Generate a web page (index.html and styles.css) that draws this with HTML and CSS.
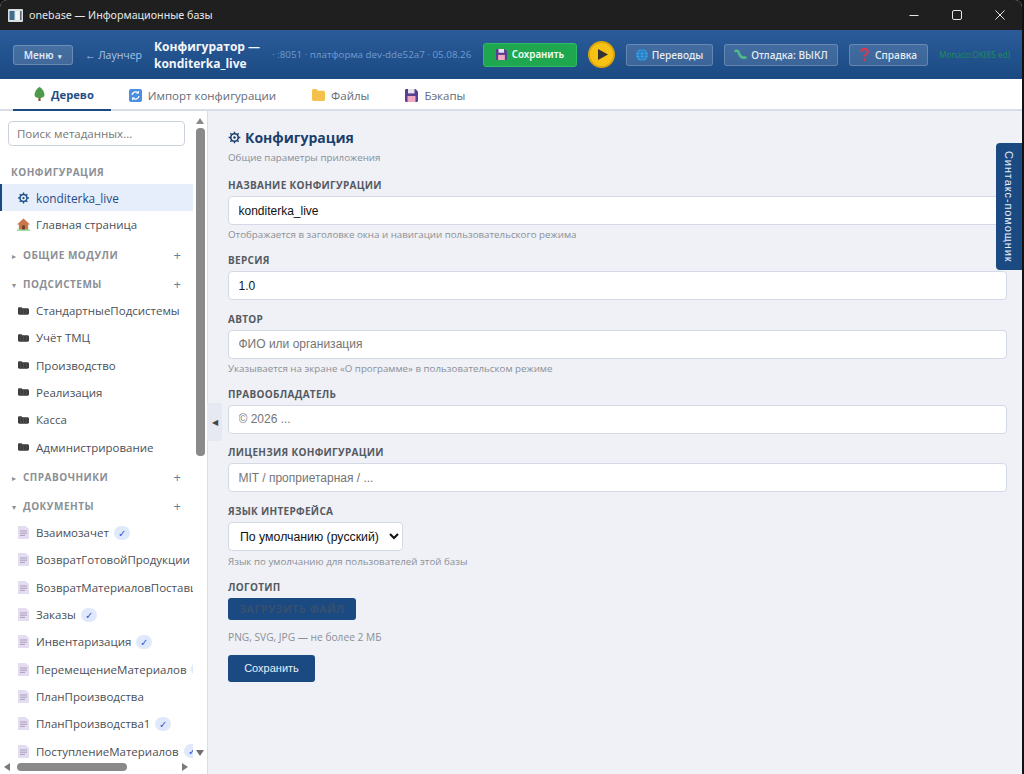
FILE: index.html
```html
<!DOCTYPE html>
<html lang="ru">
<head>
  <meta charset="UTF-8">
  <title>onebase — Информационные базы</title>
  <link rel="stylesheet" href="styles.css">
</head>
<body>
  <!-- Icon set -->
  <svg class="icon-defs" width="0" height="0">
    <symbol id="i-gear" viewBox="0 0 16 16">
      <circle cx="8" cy="8" r="4.6" fill="none" stroke="currentColor" stroke-width="2"/>
      <circle cx="8" cy="8" r="1.5" fill="currentColor"/>
      <path d="M8 .8v2.4M8 12.8v2.4M.8 8h2.4M12.8 8h2.4M2.9 2.9l1.7 1.7M11.4 11.4l1.7 1.7M2.9 13.1l1.7-1.7M11.4 4.6l1.700-1.700" stroke="currentColor" stroke-width="1.8"/>
    </symbol>
    <symbol id="i-folder" viewBox="0 0 12 10">
      <path d="M0 2.500C0 1.500.6 1 1.400 1h2.400l1 1h5.600c.9 0 1.600.7 1.600 1.600v4.200c0 .9-.7 1.200-1.600 1.200H1.400C.6 9 0 8.600 0 7.800z" fill="#3d3d3d"/>
      <path d="M3 1.500v7M6 2v7M9 2v7" stroke="#5a5a5a" stroke-width=".7"/>
    </symbol>
    <symbol id="i-doc" viewBox="0 0 11 13">
      <path d="M0 0h7.500L11 3v10H0z" fill="#e4dcf0"/>
      <path d="M2 5h7M2 7.200h7M2 9.400h5" stroke="#a99dbb" stroke-width="1"/>
    </symbol>
    <symbol id="i-floppy" viewBox="0 0 13 13">
      <path d="M0 1.200C0 .5.500 0 1.200 0h9.300L13 2.500v9.300c0 .7-.5 1.200-1.200 1.200H1.200C.5 13 0 12.500 0 11.800z" fill="#5b3f8f"/>
      <rect x="3" y="0" width="6.500" height="4.400" fill="#e8e4ef"/>
      <rect x="2.500" y="7" width="8" height="6" fill="#f2a7c3"/>
    </symbol>
  </svg>

  <div class="window">
    <!-- Title bar -->
    <div class="titlebar">
      <svg class="app-icon" width="15" height="13" viewBox="0 0 15 13">
        <rect width="15" height="13" rx="1" fill="#d9dee2"/>
        <rect x="1.500" y="2" width="5" height="9" fill="#3f6f8c"/>
        <rect x="7.500" y="2" width="4" height="9" fill="#f2f4f5"/>
        <rect x="12" y="2" width="1.600" height="9" fill="#5c6b75"/>
      </svg>
      <span class="app-title">onebase — Информационные базы</span>
      <div class="win-controls">
        <svg width="12" height="12" viewBox="0 0 12 12"><path d="M1.500 6.500h9" stroke="#e8e8e8"/></svg>
        <svg width="12" height="12" viewBox="0 0 12 12"><rect x="1.500" y="1.500" width="9" height="9" rx="1.500" fill="none" stroke="#e8e8e8"/></svg>
        <svg width="12" height="12" viewBox="0 0 12 12"><path d="M1.500 1.500l9 9M10.500 1.500l-9 9" stroke="#e8e8e8"/></svg>
      </div>
    </div>

    <!-- Header -->
    <header class="topbar">
      <button class="menu-btn">Меню <span class="caret">▾</span></button>
      <a class="back-link">← Лаунчер</a>
      <div class="app-heading">Конфигуратор — konditerka_live</div>
      <div class="platform">· :8051 · платформа dev-dde52a7 · 05.08.26</div>
      <button class="save-btn">
        <svg width="11" height="11"><use href="#i-floppy"/></svg>
        Сохранить
      </button>
      <button class="run-btn" aria-label="Запуск">
        <svg width="10" height="11" viewBox="0 0 10 11"><path d="M0 0l10 5.500L0 11z" fill="#333"/></svg>
      </button>
      <button class="tool-btn tool-translate">
        <svg width="12" height="12" viewBox="0 0 12 12">
          <circle cx="6" cy="6" r="6" fill="#3d9be0"/>
          <path d="M0 6h12M6 0c-3 3-3 9 0 12M6 0c3 3 3 9 0 12M1.200 3h9.600M1.200 9h9.600" stroke="#1f6bb0" stroke-width=".7" fill="none"/>
        </svg>
        Переводы
      </button>
      <button class="tool-btn tool-debug">
        <svg width="13" height="11" viewBox="0 0 13 11">
          <path d="M1.500 2c2.500-1 3 1 4 3.500S9 9 11.500 8.500" fill="none" stroke="#4fb98a" stroke-width="2.600" stroke-linecap="round"/>
        </svg>
        Отладка: ВЫКЛ
      </button>
      <button class="tool-btn tool-help">
        <svg width="9" height="13" viewBox="0 0 9 13">
          <path d="M1.200 3.800C1.200 2 2.600 1 4.500 1s3.300 1 3.300 2.800c0 2.400-3 2.200-3 4.600" fill="none" stroke="#e5344b" stroke-width="2"/>
          <circle cx="4.700" cy="11.600" r="1.300" fill="#e5344b"/>
        </svg>
        Справка
      </button>
      <span class="monaco">Monaco:OK(85 ed)</span>
    </header>

    <!-- Tabs -->
    <nav class="tabs">
      <a class="tab active">
        <svg width="11" height="14" viewBox="0 0 11 14">
          <rect x="4.400" y="9" width="2.200" height="5" fill="#8a5a2b"/>
          <path d="M5.500 0C8 1 10.500 5 10.500 8c0 2-2 3-5 3s-5-1-5-3c0-3 2.500-7 5-8z" fill="#4e9a4a"/>
        </svg>
        Дерево
      </a>
      <a class="tab">
        <svg width="13" height="13" viewBox="0 0 13 13">
          <rect width="13" height="13" rx="2" fill="#4a90e2"/>
          <path d="M3 6a3.500 3.500 0 0 1 6-2M10 7a3.500 3.500 0 0 1-6 2" fill="none" stroke="#fff" stroke-width="1.300"/>
          <path d="M10 1.500v3H7zM3 11.500v-3h3z" fill="#fff"/>
        </svg>
        Импорт конфигурации
      </a>
      <a class="tab">
        <svg width="13" height="12" viewBox="0 0 13 12">
          <path d="M0 1.500C0 .7.600 0 1.400 0h3.200l1.400 1.700h5.600c.8 0 1.400.6 1.400 1.400v7.500c0 .8-.6 1.400-1.400 1.400H1.400C.6 12 0 11.400 0 10.600z" fill="#f6c04d"/>
        </svg>
        Файлы
      </a>
      <a class="tab">
        <svg width="13" height="13"><use href="#i-floppy"/></svg>
        Бэкапы
      </a>
    </nav>

    <div class="workspace">
      <!-- Metadata tree -->
      <aside class="sidebar">
        <div class="sidebar-main">
          <div class="tree-pane">
            <div class="search-wrap"><input class="search" placeholder="Поиск метаданных…"></div>
            <div class="tree-caption">КОНФИГУРАЦИЯ</div>
            <div class="tree-row selected">
              <svg class="gear" width="12" height="12"><use href="#i-gear"/></svg>
              <span>konditerka_live</span>
            </div>
            <div class="tree-row">
              <svg width="14" height="13" viewBox="0 0 14 13">
                <path d="M7 0L0 6.500h2V12h10V6.500h2z" fill="#c9764a"/>
                <rect x="5.500" y="7.500" width="3" height="4.500" fill="#6b3f26"/>
                <rect y="12" width="14" height="1" fill="#49c35b"/>
              </svg>
              <span>Главная страница</span>
            </div>

            <div class="tree-section"><i>▸</i><b>ОБЩИЕ МОДУЛИ</b><em>+</em></div>

            <div class="tree-section"><i>▾</i><b>ПОДСИСТЕМЫ</b><em>+</em></div>
            <div class="tree-row"><svg class="folder" width="12" height="10"><use href="#i-folder"/></svg><span>СтандартныеПодсистемы</span></div>
            <div class="tree-row"><svg class="folder" width="12" height="10"><use href="#i-folder"/></svg><span>Учёт ТМЦ</span></div>
            <div class="tree-row"><svg class="folder" width="12" height="10"><use href="#i-folder"/></svg><span>Производство</span></div>
            <div class="tree-row"><svg class="folder" width="12" height="10"><use href="#i-folder"/></svg><span>Реализация</span></div>
            <div class="tree-row"><svg class="folder" width="12" height="10"><use href="#i-folder"/></svg><span>Касса</span></div>
            <div class="tree-row"><svg class="folder" width="12" height="10"><use href="#i-folder"/></svg><span>Администрирование</span></div>

            <div class="tree-section"><i>▸</i><b>СПРАВОЧНИКИ</b><em>+</em></div>

            <div class="tree-section"><i>▾</i><b>ДОКУМЕНТЫ</b><em>+</em></div>
            <div class="tree-row"><svg class="doc" width="11" height="13"><use href="#i-doc"/></svg><span>Взаимозачет</span><u>✓</u></div>
            <div class="tree-row"><svg class="doc" width="11" height="13"><use href="#i-doc"/></svg><span>ВозвратГотовойПродукции</span></div>
            <div class="tree-row"><svg class="doc" width="11" height="13"><use href="#i-doc"/></svg><span>ВозвратМатериаловПоставщику</span></div>
            <div class="tree-row"><svg class="doc" width="11" height="13"><use href="#i-doc"/></svg><span>Заказы</span><u>✓</u></div>
            <div class="tree-row"><svg class="doc" width="11" height="13"><use href="#i-doc"/></svg><span>Инвентаризация</span><u>✓</u></div>
            <div class="tree-row"><svg class="doc" width="11" height="13"><use href="#i-doc"/></svg><span>ПеремещениеМатериалов</span><u>✓</u></div>
            <div class="tree-row"><svg class="doc" width="11" height="13"><use href="#i-doc"/></svg><span>ПланПроизводства</span></div>
            <div class="tree-row"><svg class="doc" width="11" height="13"><use href="#i-doc"/></svg><span>ПланПроизводства1</span><u>✓</u></div>
            <div class="tree-row"><svg class="doc" width="11" height="13"><use href="#i-doc"/></svg><span>ПоступлениеМатериалов</span><u>✓</u></div>
          </div>
          <div class="vscroll">
            <span class="arrow-up"></span>
            <span class="vthumb"></span>
            <span class="arrow-down"></span>
          </div>
        </div>
        <div class="hscroll">
          <span class="arrow-left"></span>
          <span class="hthumb"></span>
          <span class="arrow-right"></span>
        </div>
      </aside>

      <button class="collapse-handle" aria-label="Свернуть">◀</button>

      <!-- Configuration form -->
      <main class="content">
        <h2 class="page-title"><svg width="13" height="13"><use href="#i-gear"/></svg> Конфигурация</h2>
        <p class="page-sub">Общие параметры приложения</p>

        <label class="field-label">НАЗВАНИЕ КОНФИГУРАЦИИ</label>
        <input class="field wide" value="konditerka_live">
        <p class="hint">Отображается в заголовке окна и навигации пользовательского режима</p>

        <label class="field-label">ВЕРСИЯ</label>
        <input class="field" value="1.0">

        <label class="field-label">АВТОР</label>
        <input class="field" placeholder="ФИО или организация">
        <p class="hint">Указывается на экране «О программе» в пользовательском режиме</p>

        <label class="field-label">ПРАВООБЛАДАТЕЛЬ</label>
        <input class="field" placeholder="© 2026 ...">

        <label class="field-label">ЛИЦЕНЗИЯ КОНФИГУРАЦИИ</label>
        <input class="field" placeholder="MIT / проприетарная / ...">

        <label class="field-label">ЯЗЫК ИНТЕРФЕЙСА</label>
        <select class="lang-select"><option>По умолчанию (русский)</option></select>
        <p class="hint hint-lang">Язык по умолчанию для пользователей этой базы</p>

        <label class="field-label">ЛОГОТИП</label>
        <button class="upload-btn">ЗАГРУЗИТЬ ФАЙЛ</button>
        <p class="hint hint-logo">PNG, SVG, JPG — не более 2 МБ</p>

        <button class="primary-btn">Сохранить</button>
      </main>

      <div class="syntax-tab">Синтакс-помощник</div>
    </div>
  </div>
</body>
</html>
```

FILE: styles.css
```css
* {
  margin: 0;
  padding: 0;
  box-sizing: border-box;
}

html, body {
  height: 100%;
  overflow: hidden;
}

body {
  background-color: #111;
  font-family: "Open Sans", "Noto Sans", sans-serif;
}

.icon-defs {
  position: absolute;
}

button {
  font-family: "Liberation Sans", Arial, sans-serif;
}

.window {
  height: 774px;
  width: 1022px;
  display: flex;
  flex-direction: column;
  background-color: #eff1f6;
  border-radius: 7px 7px 0 0;
  overflow: hidden;
  position: relative;
}

/* Title bar */
.titlebar {
  height: 30px;
  flex: none;
  background-color: #1f1f1f;
  display: flex;
  align-items: center;
  padding-left: 8px;
  color: #e6e6e6;
}
.app-title {
  font-family: "Noto Sans", sans-serif;
  font-size: 10.7px;
  margin-left: 6px;
}
.win-controls {
  margin-left: auto;
  display: flex;
  gap: 31px;
  padding-right: 16px;
}

/* Header */
.topbar {
  height: 49px;
  flex: none;
  display: flex;
  align-items: center;
  padding-left: 13px;
  background: linear-gradient(180deg, #2b5c9a 0%, #1b4a82 100%);
  color: #fff;
}
.menu-btn {
  width: 60px;
  height: 20px;
  background-color: rgba(255, 255, 255, 0.15);
  border: 1px solid rgba(255, 255, 255, 0.22);
  border-radius: 3px;
  color: #dfe8f4;
  font-family: "Noto Sans", sans-serif;
  font-size: 10px;
  font-weight: 600;
}
.caret {
  font-size: 7px;
  margin-left: 2px;
}
.back-link {
  margin-left: 12px;
  width: 69px;
  font-size: 10.5px;
  color: #a9c6ea;
  white-space: nowrap;
}
.app-heading {
  width: 118px;
  font-size: 12px;
  font-weight: 700;
  line-height: 17px;
  color: #f2f6fb;
}
.platform {
  width: 211px;
  font-size: 9.8px;
  color: #6f9bd1;
  white-space: nowrap;
}
.save-btn {
  width: 94px;
  height: 24px;
  flex: none;
  display: flex;
  align-items: center;
  justify-content: center;
  gap: 5px;
  background-color: #1fa750;
  border: 1px solid #2dbb63;
  border-radius: 3px;
  color: #f2fff6;
  font-family: "Noto Sans", sans-serif;
  font-size: 9.8px;
  font-weight: 600;
}
.run-btn {
  width: 27px;
  height: 27px;
  flex: none;
  margin-left: 11px;
  border: 2px solid #d9a50f;
  border-radius: 50%;
  background-color: #f7c213;
  display: flex;
  align-items: center;
  justify-content: center;
  padding-left: 2px;
}
.tool-btn {
  height: 22px;
  flex: none;
  display: flex;
  align-items: center;
  justify-content: center;
  gap: 4px;
  background-color: rgba(255, 255, 255, 0.13);
  border: 1px solid rgba(255, 255, 255, 0.2);
  border-radius: 3px;
  color: #e6edf6;
  font-family: "Noto Sans", sans-serif;
  font-size: 10.2px;
  font-weight: 500;
  margin-left: 11px;
}
.tool-translate { width: 87px; }
.tool-debug { width: 114px; }
.tool-help { width: 79px; }
.tool-help svg { margin-right: 2px; }
.monaco {
  margin-left: 11px;
  font-size: 8.3px;
  color: #1d8f55;
  white-space: nowrap;
}

/* Tabs */
.tabs {
  height: 32px;
  flex: none;
  display: flex;
  padding-left: 13px;
  background-color: #fff;
  border-bottom: 2px solid #d8dde8;
}
.tab {
  height: 32px;
  display: flex;
  align-items: center;
  gap: 6px;
  padding: 0 18px;
  font-size: 11.5px;
  font-weight: 500;
  color: #666b75;
}
.tab.active {
  color: #1f4e86;
  font-size: 11.2px;
  font-weight: 700;
  padding: 0 17px 0 21px;
  border-bottom: 2px solid #1b4a82;
}

/* Workspace */
.workspace {
  flex: 1;
  min-height: 0;
  display: flex;
  position: relative;
}

/* Sidebar */
.sidebar {
  width: 208px;
  flex: none;
  display: flex;
  flex-direction: column;
  background-color: #fff;
  border-right: 1px solid #d8dde8;
}
.sidebar-main {
  flex: 1;
  min-height: 0;
  display: flex;
}
.tree-pane {
  width: 193px;
  overflow: hidden;
}
.search-wrap {
  padding: 10px 8px 0;
}
.search {
  width: 177px;
  height: 25px;
  padding: 0 8px;
  border: 1px solid #ccd2dc;
  border-radius: 4px;
  font-family: "Open Sans", sans-serif;
  font-size: 11.5px;
  outline: none;
}
.search::placeholder {
  color: #777;
}
.tree-caption {
  padding-left: 11px;
  height: 20px;
  margin-top: 16px;
  margin-bottom: 2px;
  line-height: 20px;
  font-size: 10px;
  font-weight: 700;
  letter-spacing: 0.5px;
  color: #8b8f96;
}
.tree-row {
  height: 27.33px;
  display: flex;
  align-items: center;
  gap: 6px;
  padding-left: 17px;
  font-size: 11.5px;
  color: #4a4f57;
  white-space: nowrap;
}
.tree-row svg {
  width: 13px;
  flex: none;
}
.tree-row .folder {
  width: 11px;
  margin-left: 1px;
  margin-right: 1px;
}
.tree-row.selected {
  background-color: #e6edfb;
  border-left: 2px solid #1b4a82;
  padding-left: 15px;
  color: #1f4e86;
  font-size: 11.8px;
}
.tree-row .gear {
  color: #1f4e86;
}
.tree-row u {
  flex: none;
  width: 16px;
  height: 14px;
  border-radius: 8px;
  background-color: #dfe9fb;
  color: #3058d8;
  font-size: 10px;
  line-height: 14px;
  text-align: center;
  text-decoration: none;
  margin-left: -1px;
}
.tree-section {
  height: 25.1px;
  margin-top: 4px;
  display: flex;
  align-items: center;
  padding: 0 12px 0 12px;
  color: #8b8f96;
}
.tree-section i {
  width: 11px;
  font-style: normal;
  font-size: 8px;
}
.tree-section b {
  font-size: 10px;
  letter-spacing: 0.5px;
}
.tree-section em {
  margin-left: auto;
  font-style: normal;
  font-size: 13px;
  color: #5f7ea8;
}

/* Fake scrollbars */
.vscroll {
  width: 14px;
  flex: none;
  display: flex;
  flex-direction: column;
  align-items: center;
}
.arrow-up {
  margin-top: 7px;
  border-left: 4px solid transparent;
  border-right: 4px solid transparent;
  border-bottom: 6px solid #8a8a8a;
}
.vthumb {
  width: 9px;
  height: 328px;
  margin-top: 4px;
  border-radius: 4px;
  background-color: #8a8a8a;
}
.arrow-down {
  margin-top: auto;
  margin-bottom: 4px;
  border-left: 4px solid transparent;
  border-right: 4px solid transparent;
  border-top: 6px solid #6f6f6f;
}
.hscroll {
  height: 14px;
  flex: none;
  display: flex;
  align-items: center;
  padding: 0 19px 0 4px;
}
.arrow-left {
  border-top: 4px solid transparent;
  border-bottom: 4px solid transparent;
  border-right: 6px solid #7a7a7a;
}
.hthumb {
  width: 110px;
  height: 8px;
  margin-left: 7px;
  border-radius: 4px;
  background-color: #8a8a8a;
}
.arrow-right {
  margin-left: auto;
  border-top: 4px solid transparent;
  border-bottom: 4px solid transparent;
  border-left: 6px solid #7a7a7a;
}

.collapse-handle {
  position: absolute;
  left: 207px;
  top: 292px;
  width: 15px;
  height: 38px;
  background-color: #e6e9f1;
  border: none;
  border-radius: 0 3px 3px 0;
  color: #444;
  font-size: 8px;
}

/* Form */
.content {
  flex: 1;
  min-width: 0;
  padding: 16px 15px 0 20px;
}
.page-title {
  height: 20px;
  display: flex;
  align-items: center;
  gap: 4px;
  font-size: 14px;
  font-weight: 700;
  color: #1b3f6d;
}
.page-sub {
  font-size: 9.75px;
  line-height: 14px;
  margin-top: 4px;
  color: #888d96;
}
.field-label {
  display: block;
  height: 14px;
  line-height: 14px;
  margin-top: 11.7px;
  margin-bottom: 4px;
  font-size: 10px;
  font-weight: 700;
  letter-spacing: 0.3px;
  color: #555a62;
}
.page-sub + .field-label {
  margin-top: 13px;
}
.field {
  display: block;
  width: 779px;
  height: 29px;
  padding: 0 9.5px;
  background-color: #fff;
  border: 1px solid #d4d9e6;
  border-radius: 4px;
  font-family: "Liberation Sans", Arial, sans-serif;
  font-size: 12px;
  color: #111;
  outline: none;
}
.field::placeholder {
  color: #757575;
}
.hint {
  margin-top: 3px;
  line-height: 14px;
  margin-bottom: -0.7px;
  font-size: 9.75px;
  color: #8b9097;
}
.hint-lang {
  margin-top: 3.5px;
}
.lang-select {
  display: block;
  width: 175px;
  height: 29px;
  padding-left: 7px;
  background-color: #fff;
  border: 1px solid #d4d9e6;
  border-radius: 4px;
  font-family: "Liberation Sans", Arial, sans-serif;
  font-size: 12.3px;
  color: #111;
}
.upload-btn {
  display: block;
  width: 128px;
  height: 22px;
  background-color: #1b4a82;
  border: none;
  border-radius: 3px;
  color: #37506f;
  font-family: "Open Sans", sans-serif;
  font-size: 10.5px;
  font-weight: 700;
  letter-spacing: 0.6px;
}
.hint-logo {
  margin-top: 10px;
  font-size: 10.2px;
}
.primary-btn {
  display: block;
  width: 87px;
  height: 27px;
  margin-top: 12px;
  background-color: #1b4a82;
  border: none;
  border-radius: 3px;
  color: #e8eef6;
  font-size: 11px;
  font-weight: 500;
}

/* Syntax helper tab */
.syntax-tab {
  position: absolute;
  right: 0;
  top: 32px;
  width: 26px;
  height: 127px;
  background-color: #1b4a82;
  border-radius: 4px 0 0 4px;
  color: #e8eef6;
  writing-mode: vertical-rl;
  display: flex;
  align-items: center;
  justify-content: center;
  font-family: "Liberation Sans", Arial, sans-serif;
  font-size: 11px;
  letter-spacing: 0.9px;
}
```
